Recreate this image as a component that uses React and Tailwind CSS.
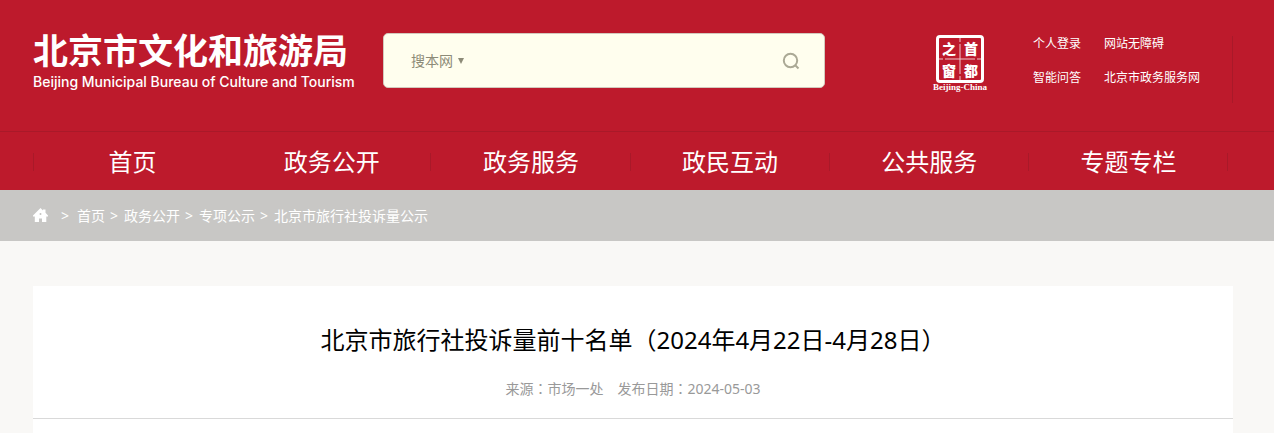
import { useState } from 'react'

const App = () => {
  return (
    <div className="min-h-screen bg-[#f9f8f6] font-['Noto_Sans','Noto_Sans_CJK_SC',sans-serif]">
      <header className="bg-[#bd1a2c] text-white">
        <div className="pr-2">
          <div className="mx-auto flex h-[131px] max-w-[1200px] items-start pt-[33px]">
            <Logo />
            <SearchBox />
            <CapitalSeal />
            <div className="mt-[3px] ml-auto flex h-[67px] items-start border-r border-[#a91929] pr-8">
              <div className="grid grid-cols-[auto_auto] gap-x-[23px] gap-y-[18px] text-xs leading-4">
                {topLinks.map((link) => (
                  <a key={link} href="#" className="whitespace-nowrap hover:underline">{link}</a>
                ))}
              </div>
            </div>
          </div>
        </div>
        <Navbar />
      </header>
      <Breadcrumb />
      <main className="pt-[45px] pr-2">
        <article className="mx-auto max-w-[1200px] bg-white pt-9 text-center">
          <h1 className="text-2xl leading-9 text-black">北京市旅行社投诉量前十名单（2024年4月22日-4月28日）</h1>
          <p className="border-b border-[#d9d9d9] pt-[19px] pb-[18px] text-sm leading-[22px] text-[#999]">
            来源<Colon />市场一处　发布日期<Colon />2024-05-03
          </p>
          <div className="h-[14px]" />
        </article>
      </main>
    </div>
  )
}

const Logo = () => (
  <a href="#" className="block w-[350px] shrink-0 whitespace-nowrap">
    <span className="block font-['Noto_Sans_CJK_SC',sans-serif] text-[35px] font-bold leading-8">北京市文化和旅游局</span>
    <span className="mt-[7px] block font-['Inter',sans-serif] text-sm font-medium leading-5">Beijing Municipal Bureau of Culture and Tourism</span>
  </a>
)

const SearchBox = () => {
  const [scope, setScope] = useState('搜本网')

  return (
    <form onSubmit={e => e.preventDefault()} className="flex h-[55px] w-[442px] items-center rounded-[5px] border border-[#d3c9bd] bg-[#fffeee] pr-6 pl-[27px] text-[#8d8b78]">
      <div className="relative flex">
        <select
          aria-label="搜索范围"
          value={scope}
          onChange={e => setScope(e.target.value)}
          className="w-[56px] appearance-none bg-transparent text-sm leading-5 outline-none"
        >
          <option>搜本网</option>
          <option>搜全市</option>
        </select>
        <svg viewBox="0 0 6 6" className="pointer-events-none absolute top-[7px] right-[3px] size-[6px] fill-current">
          <path d="M0 0h6L3 6z" />
        </svg>
      </div>
      <input type="text" aria-label="搜索" className="h-10 min-w-0 flex-1 bg-transparent px-2 text-sm outline-none" />
      <button type="submit" aria-label="提交搜索" className="text-[#aba995]">
        <svg viewBox="0 0 18 18" className="size-[18px]" fill="none" stroke="currentColor" strokeWidth="2">
          <circle cx="8.5" cy="8.5" r="6.7" />
          <path d="M13 13l3.5 3.5" />
        </svg>
      </button>
    </form>
  )
}

// Seal script badge: 首都之窗 reads right to left, top to bottom
const CapitalSeal = () => (
  <a href="#" className="ml-[106px] block w-[58px] pt-[2px] text-center">
    <span className="relative mx-auto grid size-12 grid-cols-2 grid-rows-2 gap-x-1 gap-y-[2px] rounded-sm border-3 border-white px-px font-['Noto_Sans_CJK_SC',sans-serif] text-sm font-black leading-5">
      <span>之</span>
      <span>首</span>
      <span>窗</span>
      <span>都</span>
      <svg viewBox="0 0 42 42" className="absolute inset-0 size-full" stroke="#f0c4c9" strokeWidth="1">
        <path d="M21 0v4M21 6v30M21 38v4M0 21h4M6 21h30M38 21h4" />
      </svg>
    </span>
    <span className="block font-['Liberation_Serif',serif] text-[9px] font-bold leading-2">Beijing-China</span>
  </a>
)

const Navbar = () => (
  <nav className="border-t border-[#a91929] pr-2">
    <div className="mx-auto max-w-[1200px] pr-[5px]">
      <ul className="grid h-[58px] grid-cols-6 items-center pt-[2px]">
        {navItems.map((item, index) => (
          <li key={item} className="relative text-center text-2xl leading-9">
            <a href="#">{item}</a>
            {index == 0 && <span className="absolute top-[9px] left-0 h-[18px] w-px bg-[#a91929]" />}
            {index > 0 && <span className="absolute top-[9px] right-0 h-[18px] w-px bg-[#a91929]" />}
          </li>
        ))}
      </ul>
    </div>
  </nav>
)

const Breadcrumb = () => (
  <nav className="bg-[#c8c7c5] pr-2 text-sm text-white">
    <div className="mx-auto flex h-[51px] max-w-[1200px] items-center">
      <a href="#" aria-label="首页" className="mr-[13px]">
        <svg viewBox="0 0 15 15" className="size-[15px] fill-current">
          <path fillRule="evenodd" d="M7.5 0L10 2.4V1.5h2.5v3.3L15 7.4v1h-1.7V14H9V10.5H6V14H1.8V8.4H0v-1zM6.7 5v2h1.6V5z" />
        </svg>
      </a>
      <span className="mr-2">&gt;</span>
      {crumbs.map((crumb, index) => (
        <span key={crumb} className="whitespace-nowrap">
          {index > 0 && <span className="mr-[6px] ml-[5px]">&gt;</span>}
          <a href="#" className="hover:underline">{crumb}</a>
        </span>
      ))}
    </div>
  </nav>
)

// Full-width colon centred in its cell
const Colon = () => <span className="font-['Noto_Sans_CJK_TC',sans-serif]">：</span>

const topLinks = ['个人登录', '网站无障碍', '智能问答', '北京市政务服务网']

const navItems = ['首页', '政务公开', '政务服务', '政民互动', '公共服务', '专题专栏']

const crumbs = ['首页', '政务公开', '专项公示', '北京市旅行社投诉量公示']

export default App
